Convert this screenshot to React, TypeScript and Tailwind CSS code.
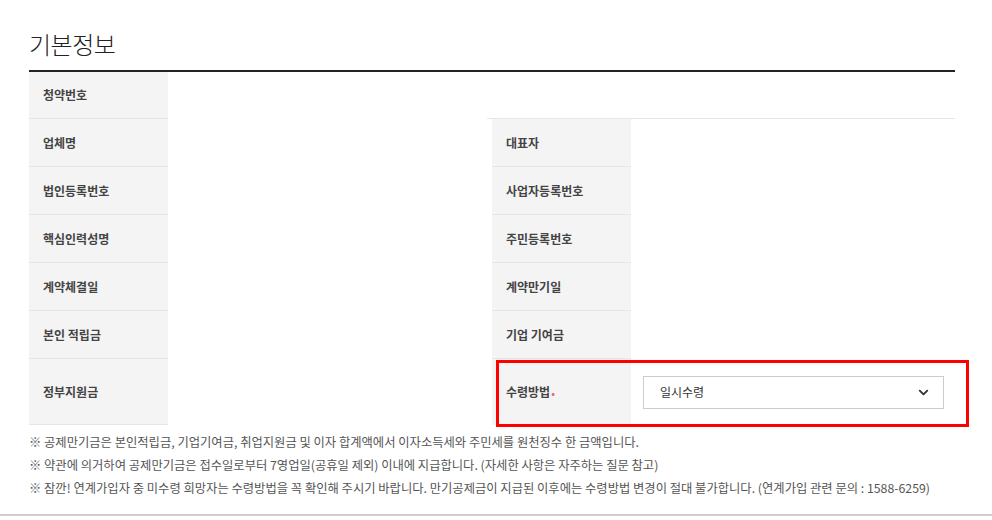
import { ChevronDown } from "lucide-react";

const font = { fontFamily: '"Noto Sans CJK KR", "Noto Sans", sans-serif' };

const rows: [string, string][] = [
  ["업체명", "대표자"],
  ["법인등록번호", "사업자등록번호"],
  ["핵심인력성명", "주민등록번호"],
  ["계약체결일", "계약만기일"],
  ["본인 적립금", "기업 기여금"],
];

function Label({ text, last }: { text: string; last?: boolean }) {
  return (
    <div
      className={`flex items-center bg-[#f4f4f4] pl-[14px] text-[12px] font-semibold text-[#444] ${
        last ? "" : "border-b border-[#e6e6e6]"
      }`}
    >
      {text}
    </div>
  );
}

export default function App() {
  return (
    <div className="w-[992px] h-[516px] bg-white border-b-2 border-[#cfcfcf] overflow-hidden" style={font}>
      <div className="w-[926px] ml-[29px] pt-[26px]">
        <h2 className="text-[24px] font-light leading-[36px] text-[#222] pb-[8px] border-b-2 border-[#222] tracking-[-0.5px]">
          기본정보
        </h2>

        <div className="relative grid grid-cols-[139px_324px_139px_324px] grid-rows-[47px_48px_48px_48px_48px_48px_66px]">
          <Label text="청약번호" />
          <div className="col-span-3 flex items-end">
            <div className="flex-1" />
            <div className="w-[468px] border-b border-[#e6e6e6]" />
          </div>

          {rows.map(([l, r]) => (
            <div key={l} className="contents">
              <Label text={l} />
              <div />
              <Label text={r} />
              <div />
            </div>
          ))}

          <Label text="정부지원금" />
          <div />
          <div className="flex items-center bg-[#f4f4f4] pl-[14px] text-[12px] font-semibold text-[#444]">
            수령방법<span className="ml-[1px] text-[#e66] text-[10px]">•</span>
          </div>
          <div className="flex items-center pl-[12px]">
            <div className="w-[301px] h-[33px] border border-[#cccccc] flex items-center justify-between pl-[16px] pr-[12px] text-[12px] text-[#333]">
              <span>일시수령</span>
              <ChevronDown size={15} strokeWidth={3} className="text-[#333]" />
            </div>
          </div>

          <div className="absolute left-[467px] top-[288px] w-[473px] h-[67px] border-[3px] border-[#ff0000]" />
        </div>

        <div className="pt-[6px] text-[12.3px] leading-[23px] text-[#555]">
          <p>※ 공제만기금은 본인적립금, 기업기여금, 취업지원금 및 이자 합계액에서 이자소득세와 주민세를 원천징수 한 금액입니다.</p>
          <p>※ 약관에 의거하여 공제만기금은 접수일로부터 7영업일(공휴일 제외) 이내에 지급합니다. (자세한 사항은 자주하는 질문 참고)</p>
          <p>
            ※ 잠깐! 연계가입자 중 미수령 희망자는 수령방법을 꼭 확인해 주시기 바랍니다. 만기공제금이 지급된 이후에는 수령방법 변경이 절대
            불가합니다. (연계가입 관련 문의 : 1588-6259)
          </p>
        </div>
      </div>
    </div>
  );
}
